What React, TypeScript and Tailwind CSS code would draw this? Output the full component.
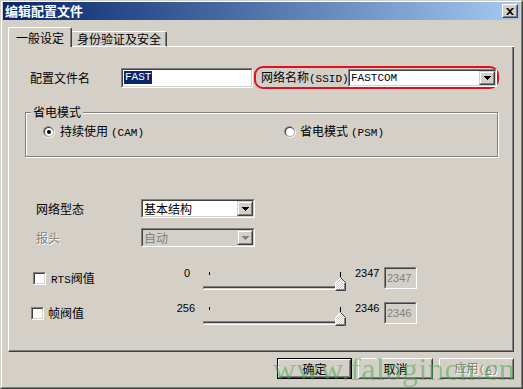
import React from "react";

const cjk = "font-['Noto_Sans_CJK_SC',sans-serif]";
const mono = "font-['Liberation_Mono','Noto_Sans_CJK_SC',monospace]";
const sans = "font-['Liberation_Sans',sans-serif]";
const dis = "text-[#808080] [text-shadow:1px_1px_0_#ffffff]";

function Sunken({
  className = "",
  inner = "bg-white",
  children,
}: {
  className?: string;
  inner?: string;
  children?: React.ReactNode;
}) {
  return (
    <div
      className={`flex-none border border-t-[#808080] border-l-[#808080] border-r-white border-b-white ${className}`}
    >
      <div
        className={`w-full h-full border border-t-[#404040] border-l-[#404040] border-r-[#d4d0c8] border-b-[#d4d0c8] ${inner}`}
      >
        {children}
      </div>
    </div>
  );
}

function Arrow({ color }: { color: string }) {
  return (
    <svg width="7" height="4" viewBox="0 0 7 4" className="block">
      <rect x="0" y="0" width="7" height="1" fill={color} />
      <rect x="1" y="1" width="5" height="1" fill={color} />
      <rect x="2" y="2" width="3" height="1" fill={color} />
      <rect x="3" y="3" width="1" height="1" fill={color} />
    </svg>
  );
}

function DropBtn({ disabled = false }: { disabled?: boolean }) {
  return (
    <div className="w-[16px] h-full flex-none border border-t-[#d4d0c8] border-l-[#d4d0c8] border-r-[#404040] border-b-[#404040]">
      <div className="w-full h-full border border-t-white border-l-white border-r-[#808080] border-b-[#808080] bg-[#d4d0c8] flex items-center justify-center">
        <Arrow color={disabled ? "#808080" : "#000000"} />
      </div>
    </div>
  );
}

function Combo({
  w,
  h = "h-[19px]",
  children,
  disabled = false,
}: {
  w: string;
  h?: string;
  children: React.ReactNode;
  disabled?: boolean;
}) {
  return (
    <Sunken
      className={`${w} ${h}`}
      inner={`flex items-stretch ${disabled ? "bg-[#d4d0c8]" : "bg-white"}`}
    >
      <div
        className={`flex-1 flex items-center pl-[1px] text-[12px] leading-[14px] ${
          disabled ? "text-[#808080]" : "text-black"
        }`}
      >
        {children}
      </div>
      <DropBtn disabled={disabled} />
    </Sunken>
  );
}

function Radio({ checked }: { checked: boolean }) {
  return (
    <svg width="12" height="12" viewBox="0 0 12 12" className="block flex-none">
      <circle cx="6" cy="6" r="6" fill="#ffffff" />
      <circle cx="5.6" cy="5.6" r="5.6" fill="#808080" />
      <circle cx="6" cy="6" r="5" fill="#d4d0c8" />
      <circle cx="5.6" cy="5.6" r="4.6" fill="#404040" />
      <circle cx="6" cy="6" r="4" fill="#ffffff" />
      {checked && <circle cx="6" cy="6" r="2" fill="#000000" />}
    </svg>
  );
}

function Checkbox() {
  return <Sunken className="w-[13px] h-[13px]" inner="bg-white" />;
}

function Slider({ pid }: { pid: string }) {
  return (
    <svg width="144" height="20" viewBox="0 0 144 20" className="block flex-none">
      <defs>
        <pattern id={pid} width="2" height="2" patternUnits="userSpaceOnUse">
          <rect width="2" height="2" fill="#d4d0c8" />
          <rect width="1" height="1" fill="#ffffff" />
          <rect x="1" y="1" width="1" height="1" fill="#ffffff" />
        </pattern>
      </defs>
      <rect x="6" y="1" width="1" height="3" fill="#000" />
      <rect x="137" y="1" width="1" height="5" fill="#000" />
      <rect x="0" y="15" width="141" height="1" fill="#808080" />
      <rect x="1" y="16" width="140" height="1" fill="#404040" />
      <rect x="1" y="17" width="140" height="1" fill="#d4d0c8" />
      <rect x="0" y="18" width="142" height="1" fill="#ffffff" />
      <rect x="0" y="15" width="1" height="3" fill="#808080" />
      <path
        d="M132.5 19.5 V11.5 L137.5 6.5 L142.5 11.5 V19.5 Z"
        fill={`url(#${pid})`}
      />
      <path d="M132.5 19 V11.5 L137.5 6.5" stroke="#ffffff" fill="none" />
      <path d="M137.5 6.5 L142.5 11.5 V19.5 H132.5" stroke="#404040" fill="none" />
      <path d="M141.5 12 V18.5 H133.5" stroke="#808080" fill="none" />
    </svg>
  );
}

function RaisedButton({
  children,
  isDefault = false,
}: {
  children: React.ReactNode;
  isDefault?: boolean;
}) {
  if (isDefault) {
    return (
      <div className="w-[75px] h-[21px] border border-black">
        <div className="w-full h-full border border-t-white border-l-white border-r-[#404040] border-b-[#404040]">
          <div className="w-full h-full border border-transparent border-r-[#808080] border-b-[#808080] flex items-center justify-center text-[12px]">
            {children}
          </div>
        </div>
      </div>
    );
  }
  return (
    <div className="w-[75px] h-[21px] border border-t-white border-l-white border-r-[#404040] border-b-[#404040]">
      <div className="w-full h-full border border-t-[#d4d0c8] border-l-[#d4d0c8] border-r-[#808080] border-b-[#808080] flex items-center justify-center text-[12px]">
        {children}
      </div>
    </div>
  );
}

export default function App() {
  return (
    <div
      className={`relative w-[523px] h-[389px] bg-[#d4d0c8] text-black text-[12px] ${cjk} border border-t-[#d4d0c8] border-l-[#d4d0c8] border-r-[#404040] border-b-[#404040] overflow-hidden`}
    >
      <div className="w-full h-full border border-t-white border-l-white border-r-[#808080] border-b-[#808080] px-[1px] flex flex-col">
        {/* Title bar */}
        <div className="h-[18px] flex-none flex items-center bg-linear-to-r from-[#0a246a] to-[#a6caf0]">
          <div className="flex-1 pl-[2px] text-white font-bold text-[13px] leading-[18px]">
            编辑配置文件
          </div>
          <div className="mr-[2px] w-[16px] h-[14px] border border-t-white border-l-white border-r-[#404040] border-b-[#404040]">
            <div className="w-full h-full border border-transparent border-r-[#808080] border-b-[#808080] bg-[#d4d0c8] flex items-center justify-center">
              <svg width="8" height="7" viewBox="0 0 8 7" className="block">
                <path
                  d="M0 0h2l2 2 2-2h2L5 3.5 8 7H6L4 5 2 7H0l3-3.5z"
                  fill="#000"
                />
              </svg>
            </div>
          </div>
        </div>

        {/* Body */}
        <div className="flex-1 flex flex-col pl-[5px] pr-[6px]">
          {/* Tabs */}
          <div className="mt-[7px] h-[20px] flex items-end">
            <div className="w-[64px] h-[20px] rounded-t-[2px] border-t border-l border-white border-r border-r-[#404040] shadow-[inset_-1px_0_0_#808080] flex items-center justify-center text-[12px] leading-[14px]">
              一般设定
            </div>
            <div className="w-[95px] h-[16px] border-t border-white border-r border-r-[#404040] border-b border-b-white shadow-[inset_-1px_0_0_#808080] rounded-tr-[2px] flex items-center justify-center text-[12px] leading-[14px]">
              身份验证及安全
            </div>
            <div className="flex-1 border-b border-white" />
          </div>

          {/* Panel */}
          <div className="h-[305px] border-l border-white border-r border-b border-r-[#404040] border-b-[#404040]">
            <div className="w-full h-full border-r border-b border-[#808080] flex flex-col">
              {/* Row 1 */}
              <div className="mt-[19px] h-[23px] flex items-center pl-[21px]">
                <div className="w-[91px] text-[12px] leading-[14px]">配置文件名</div>
                <Sunken className="w-[132px] h-[20px]" inner="bg-white flex items-center pl-[1px]">
                  <span className={`${mono} text-[11px] leading-[13px] bg-[#0a246a] text-white px-[1px]`}>
                    FAST
                  </span>
                </Sunken>
                <div className="ml-[1px] w-[245px] h-[23px] border-2 border-[#e0101c] rounded-[9px] flex items-center">
                  <div className="pl-[5px] w-[92px] flex-none text-[12px] leading-[14px] whitespace-nowrap">
                    网络名称<span className={`${mono} text-[11px]`}>(SSID)</span>
                  </div>
                  <Combo w="w-[149px]" h="h-[18px]">
                    <span className={`${mono} text-[11px]`}>FASTCOM</span>
                  </Combo>
                </div>
              </div>

              {/* Group box */}
              <fieldset className="ml-[16px] mt-[17px] w-[473px] border border-[#808080] shadow-[inset_1px_1px_0_#ffffff,1px_1px_0_#ffffff] pb-[18px]">
                <legend className="ml-[5px] px-[2px] text-[12px] leading-[12px] bg-[#d4d0c8]">
                  省电模式
                </legend>
                <div className="mt-[7px] h-[13px] ml-[17px] flex items-center">
                  <div className="w-[241px] flex items-center">
                    <Radio checked />
                    <span className="ml-[5px] leading-[13px] whitespace-nowrap">
                      持续使用<span className={`${mono} text-[11px] ml-[3px]`}>(CAM)</span>
                    </span>
                  </div>
                  <div className="flex items-center">
                    <Radio checked={false} />
                    <span className="ml-[4px] leading-[13px] whitespace-nowrap">
                      省电模式<span className={`${mono} text-[11px] ml-[3px]`}>(PSM)</span>
                    </span>
                  </div>
                </div>
              </fieldset>

              {/* 网络型态 */}
              <div className="mt-[42px] h-[19px] flex items-center pl-[27px]">
                <div className="w-[105px] leading-[14px]">网络型态</div>
                <Combo w="w-[114px]">基本结构</Combo>
              </div>
              {/* 报头 */}
              <div className="mt-[10px] h-[19px] flex items-center pl-[27px]">
                <div className={`w-[105px] leading-[14px] ${dis}`}>报头</div>
                <Combo w="w-[114px]" disabled>
                  自动
                </Combo>
              </div>

              {/* RTS row */}
              <div className="mt-[20px] h-[22px] flex items-start">
                <div className="w-[151px] flex items-start pl-[24px]">
                  <div className="mt-[5px]">
                    <Checkbox />
                  </div>
                  <div className="ml-[5px] mt-[4px] leading-[13px] whitespace-nowrap">
                    <span className={`${mono} text-[11px]`}>RTS</span>阀值
                  </div>
                </div>
                <div className={`w-[30px] text-right ${sans} text-[11px] leading-[13px]`}>0</div>
                <div className="ml-[13px] mt-[4px]">
                  <Slider pid="dither1" />
                </div>
                <div className={`ml-[8px] w-[29px] ${sans} text-[11px] leading-[13px]`}>2347</div>
                <Sunken className="w-[33px] h-[22px]" inner="bg-[#d4d0c8] flex items-center pl-[1px]">
                  <span className={`${sans} text-[11px] text-[#808080]`}>2347</span>
                </Sunken>
              </div>

              {/* 帧 row */}
              <div className="mt-[13px] h-[22px] flex items-start">
                <div className="w-[151px] flex items-start pl-[22px]">
                  <div className="mt-[5px]">
                    <Checkbox />
                  </div>
                  <div className="ml-[4px] mt-[4px] leading-[13px] whitespace-nowrap">帧阀值</div>
                </div>
                <div className={`w-[35px] text-right ${sans} text-[11px] leading-[13px]`}>256</div>
                <div className="ml-[8px] mt-[4px]">
                  <Slider pid="dither2" />
                </div>
                <div className={`ml-[8px] w-[29px] ${sans} text-[11px] leading-[13px]`}>2346</div>
                <Sunken className="w-[33px] h-[22px]" inner="bg-[#d4d0c8] flex items-center pl-[1px]">
                  <span className={`${sans} text-[11px] text-[#808080]`}>2346</span>
                </Sunken>
              </div>
            </div>
          </div>

          {/* Buttons */}
          <div className="mt-[6px] flex justify-end gap-[6px]">
            <RaisedButton isDefault>确定</RaisedButton>
            <RaisedButton>取消</RaisedButton>
            <RaisedButton>
              <span className={dis}>
                应用<span className={`${mono} text-[11px]`}>(<span className="underline">A</span>)</span>
              </span>
            </RaisedButton>
          </div>
        </div>
      </div>

      {/* Watermark overlay */}
      <div className="absolute left-[272px] top-[352px] pointer-events-none font-['Liberation_Serif',serif] text-[32px] leading-none tracking-[0.5px] text-[#3fa84a] opacity-50 whitespace-nowrap">
        www.falogincn.cn
      </div>
    </div>
  );
}
